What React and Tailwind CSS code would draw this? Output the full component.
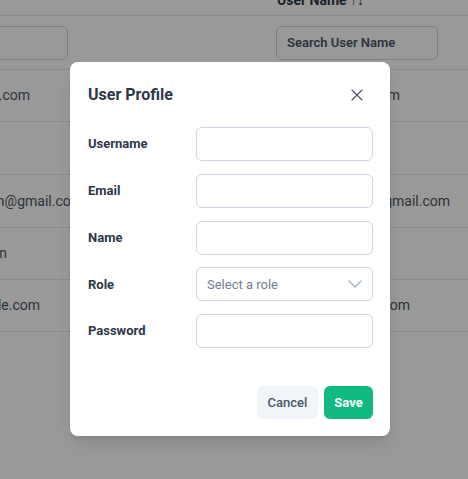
import { X } from 'lucide-react';

// widths put each cell's right edge where the reference shows it
const rows = [
  { email: 'john.doe@example.com', ew: 'w-[142px]', user: 'sam@example.com', uw: 'w-[112px]', h: 'h-[52px]' },
  { email: '', ew: 'w-[141px]', user: '', uw: 'w-[112px]', h: 'h-[53px]' },
  { email: 'john.n@gmail.com', ew: 'w-[195px]', user: 'robert.brown@gmail.com', uw: 'w-[162px]', h: 'h-[53px]' },
  { email: 'Ethan Morgan', ew: 'w-[119px]', user: '', uw: 'w-[112px]', h: 'h-[52px]' },
  { email: 'sarah.k@example.com', ew: 'w-[152px]', user: 'emily@example.com', uw: 'w-[122px]', h: 'h-[52px]' },
];

function Field({ label, children }) {
  return (
    <div className="flex items-center h-[34px]">
      <label className="w-[108px] shrink-0 text-[13px] font-bold text-[#2d3748]">{label}</label>
      {children}
    </div>
  );
}

function TextInput({ type = 'text' }) {
  return (
    <input
      type={type}
      className="w-[177px] h-[34px] rounded-md border border-[#cbd5e0] bg-white px-2.5 text-[13px] outline-none"
    />
  );
}

function UserProfileModal() {
  return (
    <div className="w-[320px] rounded-lg bg-white shadow-lg">
      <div className="flex items-center justify-between pl-[18px] pr-[23px] pt-[19px] h-[47px]">
        <h2 className="text-[16px] font-bold leading-7 text-[#2d3748]">User Profile</h2>
        <X size={20} strokeWidth={1.4} className="text-[#4a5568]" />
      </div>
      <div className="flex flex-col gap-[12.75px] pl-[18px] pr-[17px] pt-[18px]">
        <Field label="Username">
          <TextInput />
        </Field>
        <Field label="Email">
          <TextInput type="email" />
        </Field>
        <Field label="Name">
          <TextInput />
        </Field>
        <Field label="Role">
          <div className="w-[177px] h-[34px] rounded-md border border-[#cbd5e0] bg-white flex items-center justify-between pl-2.5 pr-[10px]">
            <span className="text-[13px] text-[#718096]">Select a role</span>
            <svg width="14" height="8" viewBox="0 0 14 8" fill="none" className="text-[#a0aec0]">
              <path d="M1 1l6 6 6-6" stroke="currentColor" strokeWidth="1.3" strokeLinecap="round" strokeLinejoin="round" />
            </svg>
          </div>
        </Field>
        <Field label="Password">
          <TextInput type="password" />
        </Field>
      </div>
      <div className="flex justify-end gap-1.5 pr-[17px] pt-[38px] pb-[17px]">
        <button className="h-[33px] w-[61px] rounded-md bg-[#f1f5f9] text-[13px] font-medium text-[#4a5568]">
          Cancel
        </button>
        <button className="h-[33px] w-[49px] rounded-md bg-[#10b981] text-[13px] font-bold text-white">
          Save
        </button>
      </div>
    </div>
  );
}

export default function App() {
  return (
    <div
      className="relative h-[479px] w-[468px] overflow-hidden bg-white"
      style={{ fontFamily: 'Roboto, "Noto Sans", sans-serif' }}
    >
      <div className="-mt-[14px] -ml-[112px] w-[640px]">
        <div className="flex h-[30px] items-center border-b border-[#e2e8f0] text-[14px] font-bold text-[#2d3748]">
          <div className="w-[388px] pl-3">Email ↑↓</div>
          <div className="pl-[1px]">User Name ↑↓</div>
        </div>
        <div className="flex h-[54px] items-center border-b border-[#e2e8f0]">
          <div className="w-[388px]">
            <div className="h-[34px] w-[180px] rounded-md border border-[#cbd5e0]" />
          </div>
          <div>
            <div className="flex h-[34px] w-[162px] items-center rounded-md border border-[#cbd5e0] px-2.5 text-[13px] font-semibold text-[#4a5568]">
              Search User Name
            </div>
          </div>
        </div>
        {rows.map((r, i) => (
          <div key={i} className={`flex items-center border-b border-[#e2e8f0] text-[14px] text-[#4b5563] ${r.h}`}>
            <div className="w-[400px] shrink-0">
              <div className={`flex justify-end whitespace-nowrap ${r.ew}`}>
                <span className="shrink-0">{r.email}</span>
              </div>
            </div>
            <div className={`flex shrink-0 justify-end whitespace-nowrap ${r.uw}`}>
              <span className="shrink-0">{r.user}</span>
            </div>
          </div>
        ))}
      </div>
      <div className="absolute inset-0 bg-black/40 pt-[62px] pl-[70px]">
        <UserProfileModal />
      </div>
    </div>
  );
}
